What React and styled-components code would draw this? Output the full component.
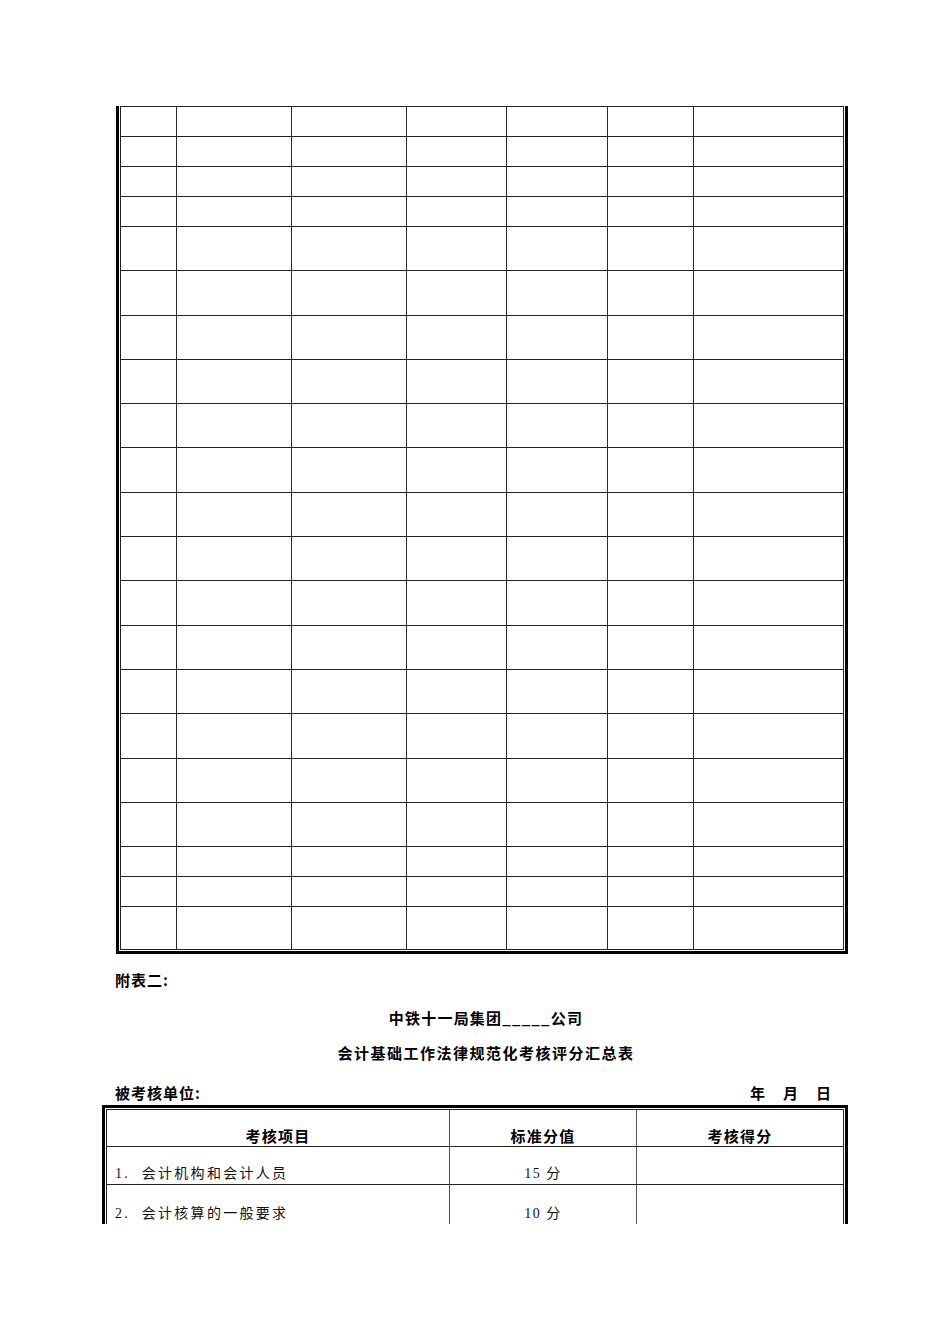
import React from 'react';
import styled, { createGlobalStyle } from 'styled-components';

const GlobalStyle = createGlobalStyle`
    html, body {
        margin: 0;
        padding: 0;
        background: #fff;
    }
    body {
        font-family: "Liberation Serif", "Noto Sans CJK SC", serif;
        color: #000;
    }
`;

const Page = styled.div`
    width: 950px;
    min-height: 1344px;
    box-sizing: border-box;
    padding: 106px 0 0 102px;
    background: #fff;
`;

const Content = styled.div`
    width: 746px;
    display: flex;
    flex-direction: column;
`;

// ---- top (continued) table ----
const GridFrame = styled.div`
    margin-left: ${p => p.$indent || 0}px;
    border: 3px solid #000;
    border-top: ${p => (p.$openTop ? 'none' : '3px solid #000')};
    border-bottom: ${p => (p.$openBottom ? 'none' : '3px solid #000')};
    padding: ${p => (p.$openTop ? 0 : 1)}px 1px ${p => (p.$openBottom ? 0 : 1)}px 1px;
    align-self: flex-start;
`;

const Grid = styled.div`
    display: grid;
    grid-template-columns: ${p => p.$cols};
    border-top: 1px solid #222;
    border-left: 1px solid #222;
    border-right: none;
`;

const Cell = styled.div`
    height: ${p => p.$h}px;
    box-sizing: border-box;
    border-right: 1px solid ${p => p.$vline || '#2a2a2a'};
    border-bottom: ${p => (p.$noBottom ? 'none' : '1px solid #222')};
    display: flex;
    align-items: flex-end;
    justify-content: ${p => (p.$center ? 'center' : 'flex-start')};
    padding-left: ${p => (p.$center ? 0 : 8)}px;
`;

const Label = styled.div`
    margin-top: 16px;
    padding-left: 13px;
    font-family: "Noto Sans CJK SC", sans-serif;
    font-weight: 700;
    font-size: 15px;
    line-height: 20px;
    letter-spacing: 1px;
`;

const Title = styled.div`
    margin-top: ${p => p.$gap}px;
    padding-left: 22px;
    text-align: center;
    font-family: "Noto Sans CJK SC", sans-serif;
    font-weight: 700;
    font-size: 15px;
    line-height: 20px;
    letter-spacing: ${p => p.$spacing}px;
`;

const MetaRow = styled.div`
    margin-top: 20px;
    display: flex;
    justify-content: space-between;
    padding: 0 17px 0 13px;
    font-family: "Noto Sans CJK SC", sans-serif;
    font-weight: 700;
    font-size: 15px;
    line-height: 20px;
    letter-spacing: 1px;
`;

const DateParts = styled.div`
    display: flex;
    gap: 18px;
    letter-spacing: 0;
`;

const SummaryWrap = styled.div`
    margin-top: 2px;
`;

const HeadText = styled.span`
    font-family: "Noto Sans CJK SC", sans-serif;
    font-weight: 700;
    font-size: 15px;
    line-height: 20px;
    letter-spacing: 1.3px;
`;

const BodyText = styled.span`
    font-family: "Liberation Serif", "Noto Sans CJK SC", serif;
    font-size: 14px;
    line-height: 20px;
    letter-spacing: ${p => p.$spacing || 2.3}px;
    white-space: pre;
    color: #111;
`;

const topCols = [56, 115, 115, 100, 101, 86, 150];
const topRows = [30, 30, 30, 30, 44, 45, 44, 44, 44, 45, 44, 44, 45, 44, 44, 45, 44, 44, 30, 30, 43];

const summaryRows = [
    { item: '1.  会计机构和会计人员', score: '15 分' },
    { item: '2.  会计核算的一般要求', score: '10 分' },
];

const App = () => {
    return (
        <>
            <GlobalStyle />
            <Page>
                <Content>
                    <GridFrame $indent={14} $openTop>
                        <Grid $cols={topCols.map(c => `${c}px`).join(' ')}>
                            {topRows.map((h, r) =>
                                topCols.map((_, c) => <Cell key={`${r}-${c}`} $h={h} />)
                            )}
                        </Grid>
                    </GridFrame>

                    <Label>附表二:</Label>
                    <Title $gap={18} $spacing={1.2}>中铁十一局集团_____公司</Title>
                    <Title $gap={15} $spacing={1.5}>会计基础工作法律规范化考核评分汇总表</Title>

                    <MetaRow>
                        <span>被考核单位:</span>
                        <DateParts>
                            <span>年</span>
                            <span>月</span>
                            <span>日</span>
                        </DateParts>
                    </MetaRow>

                    <SummaryWrap>
                        <GridFrame $openBottom>
                            <Grid $cols="343px 187px 207px">
                                <Cell $h={37} $center $vline="#555"><HeadText>考核项目</HeadText></Cell>
                                <Cell $h={37} $center $vline="#555"><HeadText>标准分值</HeadText></Cell>
                                <Cell $h={37} $center><HeadText>考核得分</HeadText></Cell>
                                {summaryRows.map((row, i) => {
                                    const last = i === summaryRows.length - 1;
                                    return (
                                        <React.Fragment key={i}>
                                            <Cell $h={last ? 39 : 38} $noBottom={last} $vline="#555">
                                                <BodyText>{row.item}</BodyText>
                                            </Cell>
                                            <Cell $h={last ? 39 : 38} $noBottom={last} $center $vline="#555">
                                                <BodyText $spacing={1.5}>{row.score}</BodyText>
                                            </Cell>
                                            <Cell $h={last ? 39 : 38} $noBottom={last} />
                                        </React.Fragment>
                                    );
                                })}
                            </Grid>
                        </GridFrame>
                    </SummaryWrap>
                </Content>
            </Page>
        </>
    );
};

export default App;
